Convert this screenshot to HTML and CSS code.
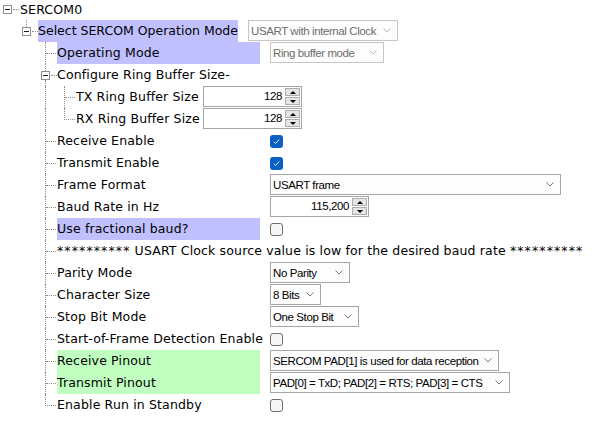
FILE: index.html
```html
<!DOCTYPE html>
<html>
<head>
<meta charset="utf-8">
<link rel="stylesheet" href="styles.css">
</head>
<body>
<div class="tree">
  <div class="row first">
    <span class="g exp"><span class="vtop"></span><span class="boxrow"><span class="xbox"><span class="minus"></span></span><span class="arm2"></span></span><span class="vbot"></span></span>
    <span class="label root">SERCOM0</span>
  </div>
  <div class="row">
    <span class="g"></span>
    <span class="g exp with-top"><span class="vtop"></span><span class="boxrow"><span class="xbox"><span class="minus"></span></span><span class="arm2"></span></span><span class="vbot"></span></span>
    <span class="label sel hl-p">Select SERCOM Operation Mode</span>
    <div class="combo disabled w150"><span class="ctext">USART with internal Clock</span><svg class="chev" width="8" height="5" viewBox="0 0 8 5"><polyline points="0.5,0.5 4,4 7.5,0.5"/></svg></div>
  </div>
  <div class="row">
    <span class="g"></span><span class="g"></span>
    <span class="g"><span class="v"><span class="arm"></span></span></span>
    <span class="label l2 hl-p">Operating Mode</span>
    <div class="combo disabled w114"><span class="ctext">Ring buffer mode</span><svg class="chev" width="8" height="5" viewBox="0 0 8 5"><polyline points="0.5,0.5 4,4 7.5,0.5"/></svg></div>
  </div>
  <div class="row">
    <span class="g"></span><span class="g"></span>
    <span class="g exp with-top with-bot"><span class="vtop"></span><span class="boxrow"><span class="xbox"><span class="minus"></span></span><span class="arm2"></span></span><span class="vbot"></span></span>
    <span class="label">Configure Ring Buffer Size-</span>
  </div>
  <div class="row">
    <span class="g"></span><span class="g"></span>
    <span class="g"><span class="v"></span></span>
    <span class="g"><span class="v"><span class="arm"></span></span></span>
    <span class="label l3">TX Ring Buffer Size</span>
    <div class="spin"><span class="snum">128</span><span class="sbtns"><span class="sb"><span class="tri-up"></span></span><span class="sb"><span class="tri-dn"></span></span></span></div>
  </div>
  <div class="row">
    <span class="g"></span><span class="g"></span>
    <span class="g"><span class="v"></span></span>
    <span class="g"><span class="el"></span></span>
    <span class="label l3">RX Ring Buffer Size</span>
    <div class="spin"><span class="snum">128</span><span class="sbtns"><span class="sb"><span class="tri-up"></span></span><span class="sb"><span class="tri-dn"></span></span></span></div>
  </div>
  <div class="row">
    <span class="g"></span><span class="g"></span>
    <span class="g"><span class="v"><span class="arm"></span></span></span>
    <span class="label l2">Receive Enable</span>
    <span class="cb on"><svg width="13" height="13" viewBox="0 0 13 13"><polyline points="3.8,6.8 5.6,8.5 9.2,4.6"/></svg></span>
  </div>
  <div class="row">
    <span class="g"></span><span class="g"></span>
    <span class="g"><span class="v"><span class="arm"></span></span></span>
    <span class="label l2">Transmit Enable</span>
    <span class="cb on"><svg width="13" height="13" viewBox="0 0 13 13"><polyline points="3.8,6.8 5.6,8.5 9.2,4.6"/></svg></span>
  </div>
  <div class="row">
    <span class="g"></span><span class="g"></span>
    <span class="g"><span class="v"><span class="arm"></span></span></span>
    <span class="label l2">Frame Format</span>
    <div class="combo w291"><span class="ctext">USART frame</span><svg class="chev" width="8" height="5" viewBox="0 0 8 5"><polyline points="0.5,0.5 4,4 7.5,0.5"/></svg></div>
  </div>
  <div class="row">
    <span class="g"></span><span class="g"></span>
    <span class="g"><span class="v"><span class="arm"></span></span></span>
    <span class="label l2">Baud Rate in Hz</span>
    <div class="spin"><span class="snum">115,200</span><span class="sbtns"><span class="sb"><span class="tri-up"></span></span><span class="sb"><span class="tri-dn"></span></span></span></div>
  </div>
  <div class="row">
    <span class="g"></span><span class="g"></span>
    <span class="g"><span class="v"><span class="arm"></span></span></span>
    <span class="label l2 hl-p">Use fractional baud?</span>
    <span class="cb"></span>
  </div>
  <div class="row">
    <span class="g"></span><span class="g"></span>
    <span class="g"><span class="v"><span class="arm"></span></span></span>
    <span class="label"><span class="stars">**********</span> USART Clock source value is low for the desired baud rate <span class="stars">**********</span></span>
  </div>
  <div class="row">
    <span class="g"></span><span class="g"></span>
    <span class="g"><span class="v"><span class="arm"></span></span></span>
    <span class="label l2">Parity Mode</span>
    <div class="combo w80"><span class="ctext">No Parity</span><svg class="chev" width="8" height="5" viewBox="0 0 8 5"><polyline points="0.5,0.5 4,4 7.5,0.5"/></svg></div>
  </div>
  <div class="row">
    <span class="g"></span><span class="g"></span>
    <span class="g"><span class="v"><span class="arm"></span></span></span>
    <span class="label l2">Character Size</span>
    <div class="combo w51"><span class="ctext">8 Bits</span><svg class="chev" width="8" height="5" viewBox="0 0 8 5"><polyline points="0.5,0.5 4,4 7.5,0.5"/></svg></div>
  </div>
  <div class="row">
    <span class="g"></span><span class="g"></span>
    <span class="g"><span class="v"><span class="arm"></span></span></span>
    <span class="label l2">Stop Bit Mode</span>
    <div class="combo w89"><span class="ctext">One Stop Bit</span><svg class="chev" width="8" height="5" viewBox="0 0 8 5"><polyline points="0.5,0.5 4,4 7.5,0.5"/></svg></div>
  </div>
  <div class="row">
    <span class="g"></span><span class="g"></span>
    <span class="g"><span class="v"><span class="arm"></span></span></span>
    <span class="label l2">Start-of-Frame Detection Enable</span>
    <span class="cb"></span>
  </div>
  <div class="row">
    <span class="g"></span><span class="g"></span>
    <span class="g"><span class="v"><span class="arm"></span></span></span>
    <span class="label l2 hl-g">Receive Pinout</span>
    <div class="combo w229"><span class="ctext">SERCOM PAD[1] is used for data reception</span><svg class="chev" width="8" height="5" viewBox="0 0 8 5"><polyline points="0.5,0.5 4,4 7.5,0.5"/></svg></div>
  </div>
  <div class="row">
    <span class="g"></span><span class="g"></span>
    <span class="g"><span class="v"><span class="arm"></span></span></span>
    <span class="label l2 hl-g">Transmit Pinout</span>
    <div class="combo w240"><span class="ctext">PAD[0] = TxD; PAD[2] = RTS; PAD[3] = CTS</span><svg class="chev" width="8" height="5" viewBox="0 0 8 5"><polyline points="0.5,0.5 4,4 7.5,0.5"/></svg></div>
  </div>
  <div class="row">
    <span class="g"></span><span class="g"></span>
    <span class="g"><span class="el"></span></span>
    <span class="label l2">Enable Run in Standby</span>
    <span class="cb"></span>
  </div>
</div>
</body>
</html>
```
FILE: styles.css
```css
html, body {
  margin: 0;
  padding: 0;
  background: #ffffff;
}

.tree {
  display: flex;
  flex-direction: column;
  font-family: "DejaVu Sans", Verdana, sans-serif;
  font-size: 12.5px;
  letter-spacing: 0.15px;
  color: #000;
}

.row {
  display: flex;
  height: 22px;
  align-items: stretch;
}

.row.first {
  height: 20px;
}

/* tree gutter cells */
.g {
  flex: none;
  width: 19px;
  box-sizing: border-box;
  padding-left: 7px;
  display: flex;
  flex-direction: column;
}

.v {
  flex: 1;
  border-left: 1px dotted #8c8c8c;
}

.arm {
  display: block;
  width: 10px;
  height: 11px;
  border-bottom: 1px dotted #8c8c8c;
}

.el {
  display: block;
  width: 10px;
  height: 11px;
  border-left: 1px dotted #8c8c8c;
  border-bottom: 1px dotted #8c8c8c;
}

.g.exp {
  padding-left: 3px;
}

.vtop {
  display: block;
  height: 7px;
  margin-left: 4px;
  flex: none;
}

.first .vtop {
  height: 5px;
}

.with-top .vtop {
  border-left: 1px dotted #8c8c8c;
}

.vbot {
  display: block;
  flex: 1;
  margin-left: 4px;
}

.with-bot .vbot {
  border-left: 1px dotted #8c8c8c;
}

.boxrow {
  display: flex;
  height: 9px;
  flex: none;
}

.xbox {
  width: 9px;
  height: 9px;
  box-sizing: border-box;
  border: 1px solid #8e8f8f;
  background: #fff;
  display: flex;
  align-items: center;
  justify-content: center;
}

.minus {
  width: 5px;
  height: 1px;
  background: #1a1a1a;
}

.arm2 {
  display: block;
  width: 6px;
  height: 4px;
  margin-left: 1px;
  border-bottom: 1px dotted #8c8c8c;
}

/* labels */
.label {
  flex: none;
  display: block;
  line-height: 22px;
  white-space: nowrap;
}

.first .label {
  line-height: 20px;
}

.label.root {
  margin-left: 1px;
}

.label.sel {
  width: 200px;
  letter-spacing: 0;
}
.label.l2 { width: 203px; }
.label.l3 { width: 117px; }

.stars {
  letter-spacing: 1.1px;
}

.hl-p { background: #c0c0ff; }
.hl-g { background: #c0ffc0; }

/* combo boxes */
.combo {
  flex: none;
  margin-left: 10px;
  height: 21px;
  box-sizing: border-box;
  border: 1px solid #a5a5a5;
  background: #fdfdfd;
  display: flex;
  align-items: center;
  padding: 0 6px 0 2px;
  font-family: "Liberation Sans", Arial, sans-serif;
  font-size: 11.5px;
  letter-spacing: -0.4px;
  color: #000;
  white-space: nowrap;
}

.combo .ctext {
  flex: 1;
}

.combo .chev {
  flex: none;
  margin-left: 4px;
}

.chev polyline {
  fill: none;
  stroke: #7a7a7a;
  stroke-width: 1;
}

.combo.disabled {
  border-color: #c6c6c6;
  color: #6d6d6d;
}

.combo.disabled .chev polyline {
  stroke: #b8b8b8;
}

.w150 { width: 150px; }
.w114 { width: 114px; }
.w291 { width: 291px; }
.w80 { width: 80px; }
.w51 { width: 51px; }
.w89 { width: 89px; }
.w229 { width: 229px; }
.w240 { width: 240px; }

/* spinners */
.spin {
  flex: none;
  margin-left: 10px;
  width: 99px;
  height: 21px;
  box-sizing: border-box;
  border: 1px solid #a5a5a5;
  background: #fff;
  display: flex;
  padding: 1px;
  font-family: "Liberation Sans", Arial, sans-serif;
  font-size: 11.5px;
  letter-spacing: -0.4px;
}

.snum {
  flex: 1;
  text-align: right;
  line-height: 17px;
  padding-right: 3px;
}

.sbtns {
  flex: none;
  width: 15px;
  display: flex;
  flex-direction: column;
  gap: 1px;
}

.sb {
  flex: 1;
  box-sizing: border-box;
  border: 1px solid #adadad;
  background: #e5e5e5;
  display: flex;
  align-items: center;
  justify-content: center;
}

.tri-up {
  width: 0;
  height: 0;
  border-left: 3.5px solid transparent;
  border-right: 3.5px solid transparent;
  border-bottom: 3px solid #000;
}

.tri-dn {
  width: 0;
  height: 0;
  border-left: 3.5px solid transparent;
  border-right: 3.5px solid transparent;
  border-top: 3px solid #000;
}

/* checkboxes */
.cb {
  flex: none;
  align-self: center;
  margin-left: 10px;
  width: 13px;
  height: 13px;
  box-sizing: border-box;
  border-radius: 3px;
  border: 1px solid #6f6f6f;
  background: #f6f6f6;
  display: flex;
}

.cb.on {
  border: none;
  background: #0a5fc2;
}

.cb svg polyline {
  fill: none;
  stroke: #dfe9f7;
  stroke-width: 1;
}
```
